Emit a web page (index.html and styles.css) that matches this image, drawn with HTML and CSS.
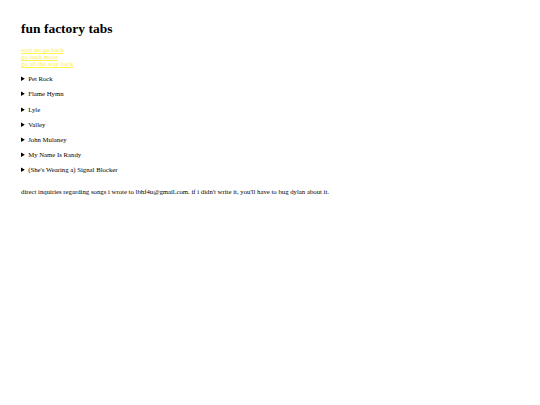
FILE: index.html
```html
<!DOCTYPE html>
<html>
<head>
<meta charset="utf-8">
<title>fun factory tabs</title>
<link rel="stylesheet" href="styles.css">
</head>
<body>
<h1 class="title">fun factory tabs</h1>
<nav class="back">
<a href="#">wait no go back</a><br>
<a href="#">go back more</a><br>
<a href="#">go all the way back</a>
</nav>
<details class="song"><summary>Pet Rock</summary></details>
<details class="song"><summary>Flame Hymn</summary></details>
<details class="song"><summary>Lyle</summary></details>
<details class="song"><summary>Valley</summary></details>
<details class="song"><summary>John Mulaney</summary></details>
<details class="song"><summary>My Name Is Randy</summary></details>
<details class="song"><summary>(She's Wearing a) Signal Blocker</summary></details>
<p class="note">direct inquiries regarding songs i wrote to lbhf4u@gmail.com. if i didn't write it, you'll have to bug dylan about it.</p>
</body>
</html>
```
FILE: styles.css
```css
html { background: #fff; }
body {
  margin: 0;
  padding: 12px 21px;
  font-family: "Liberation Serif", "Times New Roman", serif;
  font-size: 6.75px;
  color: #000;
}
.title {
  font-size: 13.5px;
  font-weight: bold;
  margin: 9px 0;
}
.back { margin: 0 0 7.6px; }
.back a { color: #fff04a; }
.song { margin: 8.2px 0; }
.song summary { cursor: pointer; }
.note { margin: 14.4px 0; }
```
